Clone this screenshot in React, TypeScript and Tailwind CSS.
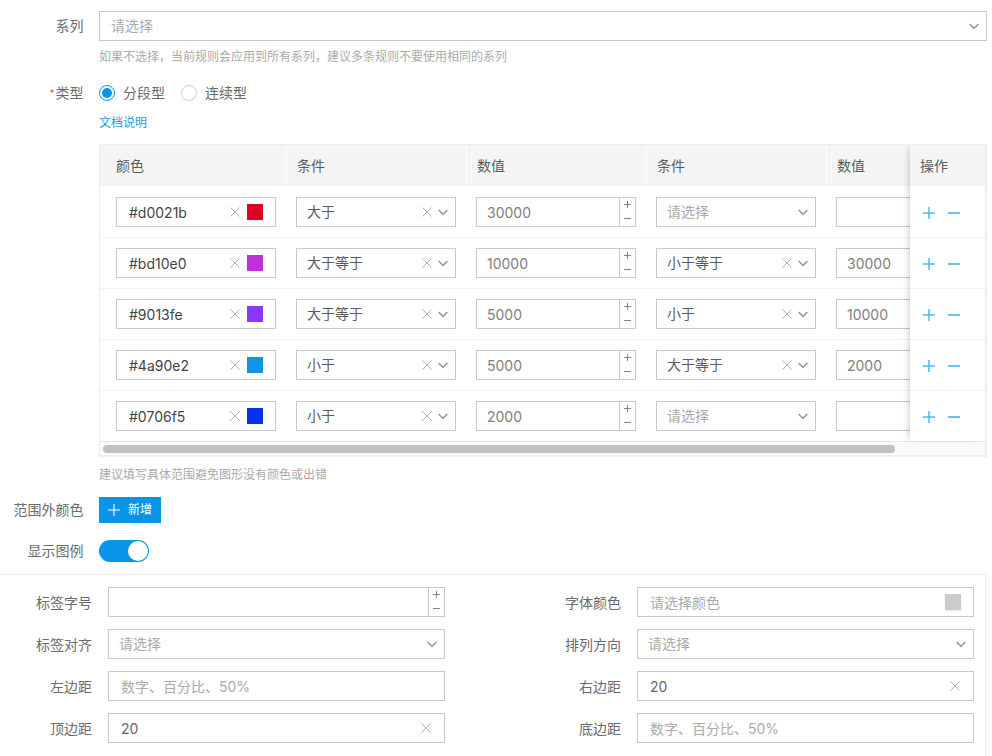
import type { ReactNode } from "react";

const rows = [
  { color: "#d0021b", swatch: "bg-[#e30025]", c1: "大于", v1: "30000", c2: "", v2: "" },
  { color: "#bd10e0", swatch: "bg-[#c42fdc]", c1: "大于等于", v1: "10000", c2: "小于等于", v2: "30000" },
  { color: "#9013fe", swatch: "bg-[#8c38f8]", c1: "大于等于", v1: "5000", c2: "小于", v2: "10000" },
  { color: "#4a90e2", swatch: "bg-[#0e95e3]", c1: "小于", v1: "5000", c2: "大于等于", v2: "2000" },
  { color: "#0706f5", swatch: "bg-[#0433f0]", c1: "小于", v1: "2000", c2: "", v2: "" },
];

function Clear({ className = "" }: { className?: string }) {
  return (
    <svg width="10" height="10" viewBox="0 0 10 10" className={`shrink-0 ${className}`}>
      <path d="M.5.5l9 9M9.5.5l-9 9" stroke="#a6a6a6" strokeWidth="0.9" fill="none" />
    </svg>
  );
}

function Chevron() {
  return (
    <svg width="10" height="7" viewBox="0 0 10 7" className="shrink-0">
      <path d="M.6 1l4.4 4.4L9.4 1" stroke="#999" strokeWidth="1.6" fill="none" />
    </svg>
  );
}

function Box({ className = "", children }: { className?: string; children?: ReactNode }) {
  return (
    <div className={`flex h-[30px] shrink-0 items-center border border-[#c9c9c9] bg-white text-sm ${className}`}>
      {children}
    </div>
  );
}

function Select({ value, placeholder = "请选择", className = "w-40", pl = "pl-2.5" }: {
  value?: string;
  placeholder?: string;
  className?: string;
  pl?: string;
}) {
  return (
    <Box className={`${pl} pr-[7px] ${className}`}>
      <span className={`flex-1 truncate ${value ? "text-[#5c5c5c]" : "text-[#aaa]"}`}>{value || placeholder}</span>
      {value ? <Clear className="mr-[6px]" /> : null}
      <Chevron />
    </Box>
  );
}

function Stepper({ value, className = "w-40" }: { value?: string; className?: string }) {
  return (
    <Box className={`pl-2.5 ${className}`}>
      <span className="flex-1 pt-px text-[#808080]">{value}</span>
      <div className="flex h-full w-4 flex-col items-center justify-between border-l border-[#c9c9c9] pb-1 pt-[3px]">
        <svg width="7" height="7" viewBox="0 0 7 7"><path d="M0 3.5h7M3.5 0v7" stroke="#777" strokeWidth="0.9" /></svg>
        <svg width="7" height="7" viewBox="0 0 7 7"><path d="M0 3.5h7" stroke="#777" strokeWidth="0.9" /></svg>
      </div>
    </Box>
  );
}

function ColorRow({ color, swatch }: { color: string; swatch: string }) {
  return (
    <Box className="w-40 pl-3 pr-3">
      <span className="flex-1 pt-px text-[#444]">{color}</span>
      <Clear className="mr-[7px]" />
      <span className={`size-4 ${swatch}`} />
    </Box>
  );
}

function HeadCell({ label, className }: { label: string; className: string }) {
  return (
    <div className={`flex h-full shrink-0 items-center border-r border-white text-sm text-[#5c5c5c] ${className}`}>{label}</div>
  );
}

function Rules() {
  return (
    <div className="relative h-[313px] overflow-hidden border border-b-2 border-r-2 border-[#eee]">
      <div className="flex h-[41px] bg-[#f5f5f5]">
        <HeadCell label="颜色" className="w-[187px] pl-4" />
        <HeadCell label="条件" className="w-[180px] pl-2.5" />
        <HeadCell label="数值" className="w-[180px] pl-2.5" />
        <HeadCell label="条件" className="w-[180px] pl-2.5" />
        <HeadCell label="数值" className="w-[180px] pl-2.5" />
      </div>
      <div>
        {rows.map((r) => (
          <div key={r.color} className="flex h-[51px] items-start border-t border-[#f2f2f2] pt-2.5 first:border-t-transparent">
            <div className="w-[187px] shrink-0 pl-4"><ColorRow color={r.color} swatch={r.swatch} /></div>
            <div className="w-[180px] shrink-0 pl-[9px]"><Select value={r.c1} /></div>
            <div className="w-[180px] shrink-0 pl-[9px]"><Stepper value={r.v1} /></div>
            <div className="w-[180px] shrink-0 pl-[9px]"><Select value={r.c2} /></div>
            <div className="w-[180px] shrink-0 pl-[9px]"><Stepper value={r.v2} /></div>
          </div>
        ))}
      </div>
      <div className="h-[14px] border-t border-[#e5e5e5] bg-[#fafafa] px-[3px] pt-[3px]">
        <div className="h-2 w-[792px] rounded-full bg-[#c1c1c1]" />
      </div>

      <div className="absolute right-0 top-0 h-[296px] w-[75px] bg-white shadow-[-5px_0_6px_-3px_rgba(0,0,0,0.16)]">
        <div className="flex h-[41px] items-center bg-[#f5f5f5] pl-2.5 text-sm text-[#5c5c5c]">操作</div>
        <div>
          {rows.map((r) => (
            <div key={r.color} className="flex h-[51px] items-center gap-[13px] border-t border-[#f2f2f2] pl-[13px] pt-[2px] first:border-t-transparent">
              <svg width="12" height="12" viewBox="0 0 12 12"><path d="M0 6h12M6 0v12" stroke="#4db7f0" strokeWidth="1.5" /></svg>
              <svg width="12" height="12" viewBox="0 0 12 12"><path d="M0 6h12" stroke="#4db7f0" strokeWidth="1.7" /></svg>
            </div>
          ))}
        </div>
      </div>
    </div>
  );
}

function Row({ label, required, className = "", children }: {
  label: string;
  required?: boolean;
  className?: string;
  children: ReactNode;
}) {
  return (
    <div className={`flex ${className}`}>
      <div className="flex w-[83.5px] shrink-0 items-center justify-end text-sm text-[#6b6b6b]">
        {required ? <span className="mr-px text-[10px] text-[#f0506e]">*</span> : null}
        {label}
      </div>
      <div className="ml-[15.5px] min-w-0 flex-1">{children}</div>
    </div>
  );
}

function Radio({ label, on }: { label: string; on?: boolean }) {
  return (
    <div className="flex items-center gap-2 text-sm text-[#6b6b6b]">
      <span className={`grid size-4 place-items-center rounded-full border bg-white ${on ? "border-[#0895e9]" : "border-[#d0d0d0]"}`}>
        {on ? <span className="size-[10px] rounded-full bg-[#0895e9]" /> : null}
      </span>
      {label}
    </div>
  );
}

function Field({ label, children }: { label: string; children: ReactNode }) {
  return (
    <div className="flex h-[30px] items-center">
      <div className="w-[92px] shrink-0 pt-0.5 text-right text-sm text-[#6b6b6b]">{label}</div>
      <div className="ml-4 w-[337px]">{children}</div>
    </div>
  );
}

function TextField({ value, placeholder }: { value?: string; placeholder?: string }) {
  return (
    <Box className="w-full pl-3 pr-[13px]">
      <span className={`flex-1 pt-px ${value ? "text-[#666]" : "text-[#aaa]"}`}>{value || placeholder}</span>
      {value ? <Clear /> : null}
    </Box>
  );
}

export default function App() {
  return (
    <div className="h-[756px] w-[992px] overflow-hidden bg-white pt-[11px] font-[Inter,'Noto_Sans_CJK_SC',sans-serif]">
      <div className="w-[987px]">
        <Row label="系列" className="h-[30px]">
          <Select className="w-full" pl="pl-[11px]" />
        </Row>
        <div className="ml-[99px] mt-[7px] text-xs leading-[18px] text-[#aaa]">
          如果不选择，当前规则会应用到所有系列，建议多条规则不要使用相同的系列
        </div>
        <Row label="类型" required className="mt-3 h-[30px]">
          <div className="flex h-full items-center gap-4">
            <Radio label="分段型" on />
            <Radio label="连续型" />
          </div>
        </Row>
        <div className="ml-[99px] mt-1.5 text-xs leading-[18px] text-[#1a9be8]">文档说明</div>
        <div className="ml-[99px] mt-3">
          <Rules />
        </div>
        <div className="ml-[99px] mt-[9px] text-xs leading-[18px] text-[#aaa]">建议填写具体范围避免图形没有颜色或出错</div>
        <Row label="范围外颜色" className="mt-[13px] h-[26px]">
          <div className="flex h-[26px] w-[62px] items-center gap-2 bg-[#0895e9] pl-[9px] text-xs text-white">
            <svg width="12" height="12" viewBox="0 0 12 12"><path d="M0 6h12M6 0v12" stroke="#fff" strokeWidth="1.1" /></svg>
            新增
          </div>
        </Row>
        <Row label="显示图例" className="mt-[17px] h-[22px]">
          <div className="flex h-[22px] w-[50px] items-center justify-end rounded-full bg-[#0895e9] pr-px">
            <span className="size-5 rounded-full bg-white" />
          </div>
        </Row>
      </div>

      <div className="mt-3 grid h-[182px] w-[986px] grid-cols-[529px_1fr] content-start gap-y-3 border-r border-t border-[#eee] pt-3">
        <Field label="标签字号"><Stepper className="w-full" /></Field>
        <Field label="字体颜色">
          <Box className="w-full pl-3 pr-3">
            <span className="flex-1 pt-px text-[#aaa]">请选择颜色</span>
            <span className="size-4 bg-[#cbcbcb] shadow-[0_1px_2px_rgba(0,0,0,0.1)]" />
          </Box>
        </Field>
        <Field label="标签对齐"><Select className="w-full" /></Field>
        <Field label="排列方向"><Select className="w-full" /></Field>
        <Field label="左边距"><TextField placeholder="数字、百分比、50%" /></Field>
        <Field label="右边距"><TextField value="20" /></Field>
        <Field label="顶边距"><TextField value="20" /></Field>
        <Field label="底边距"><TextField placeholder="数字、百分比、50%" /></Field>
      </div>
    </div>
  );
}
